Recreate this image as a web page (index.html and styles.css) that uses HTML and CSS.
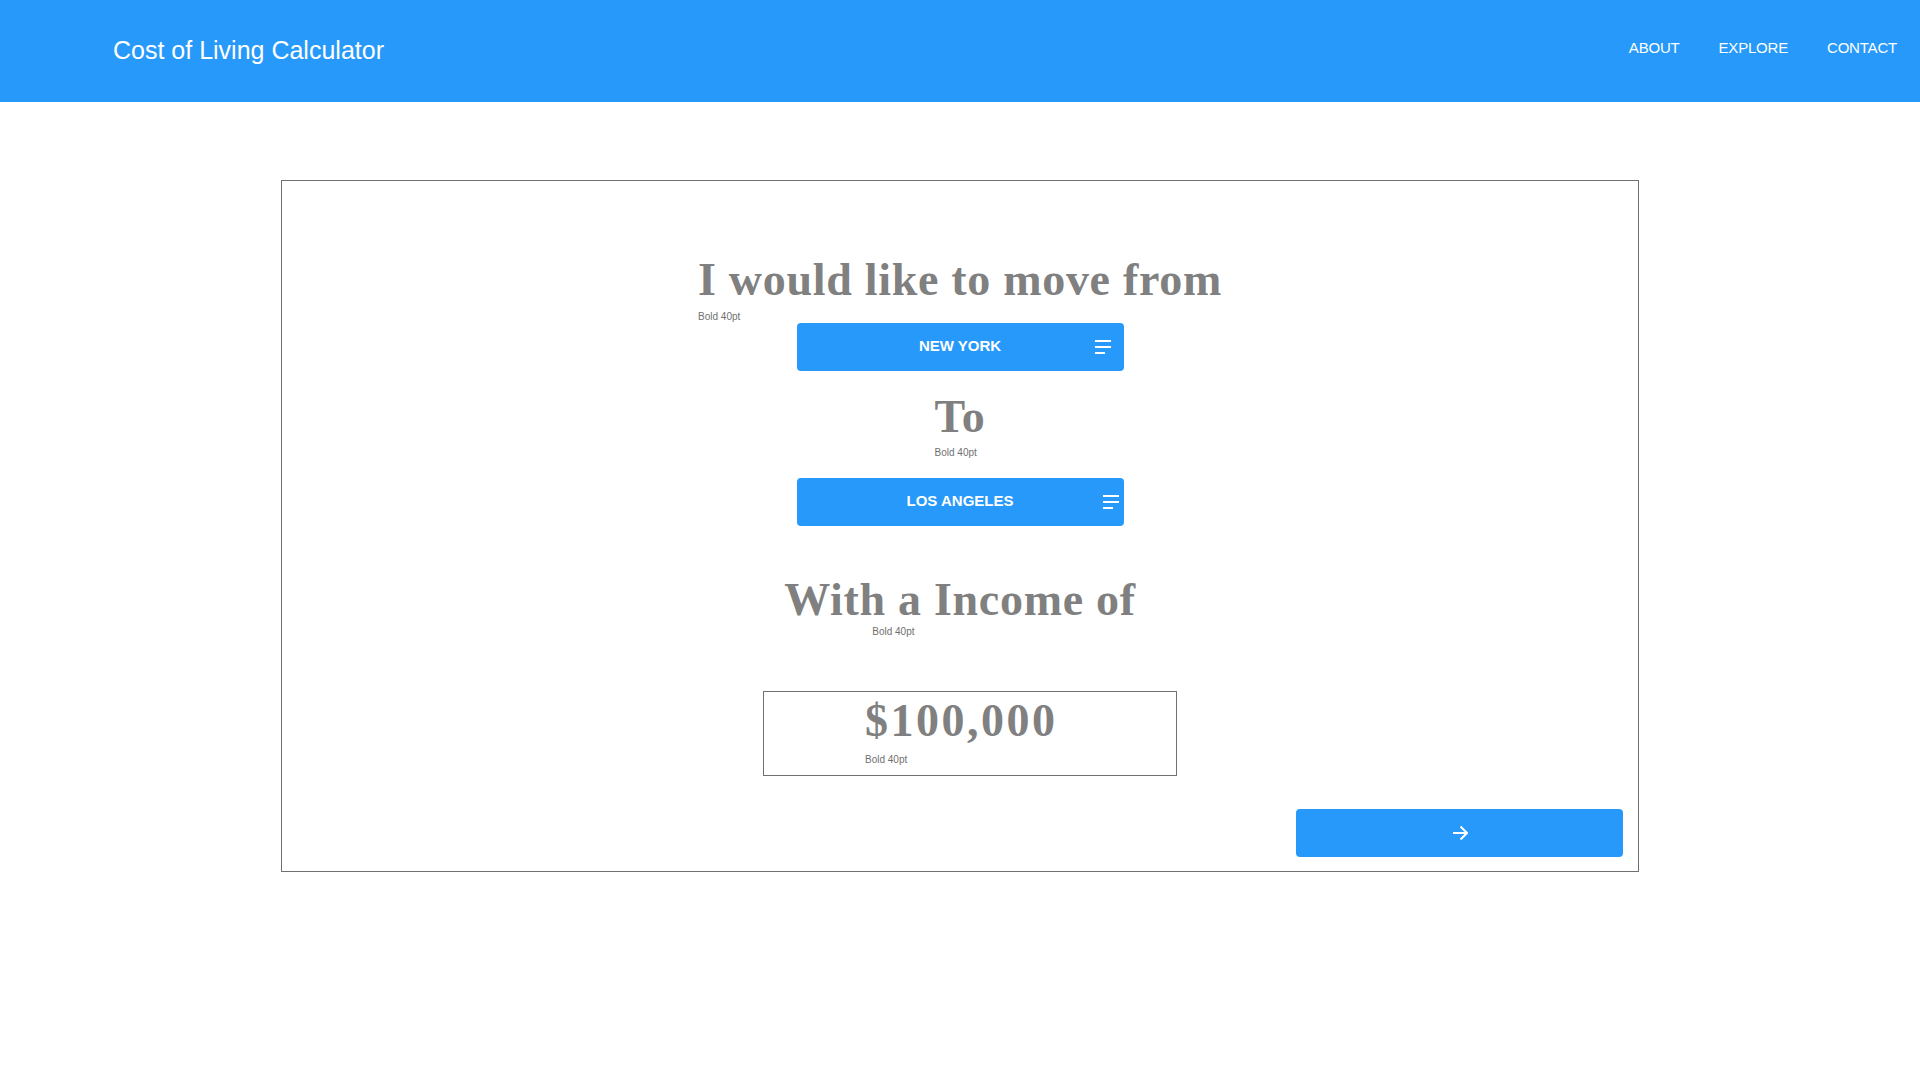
FILE: index.html
```html
<!DOCTYPE html>
<html lang="en">
<head>
<meta charset="utf-8">
<title>Cost of Living Calculator</title>
<link rel="stylesheet" href="styles.css">
</head>
<body>
<header class="topbar">
  <div class="brand">Cost of Living Calculator</div>
  <nav class="nav">
    <a class="nav-link" href="#">ABOUT</a>
    <a class="nav-link" href="#">EXPLORE</a>
    <a class="nav-link" href="#">CONTACT</a>
  </nav>
</header>

<main class="card">
  <div class="group">
    <h2 class="title">I would like to move from</h2>
    <div class="note">Bold 40pt</div>
  </div>
  <button class="select select-first">
    <span class="select-text">NEW YORK</span>
    <svg class="menu-icon menu-icon-a" width="16" height="14" viewBox="0 0 16 14"><path d="M0 1h16M0 7h16M0 13h10" stroke="#fff" stroke-width="2" fill="none"/></svg>
  </button>

  <div class="group group-to">
    <h2 class="title">To</h2>
    <div class="note">Bold 40pt</div>
  </div>
  <button class="select select-second">
    <span class="select-text">LOS ANGELES</span>
    <svg class="menu-icon menu-icon-b" width="16" height="14" viewBox="0 0 16 14"><path d="M0 1h16M0 7h16M0 13h10" stroke="#fff" stroke-width="2" fill="none"/></svg>
  </button>

  <div class="group group-income">
    <h2 class="title">With a Income of</h2>
    <div class="note note-shift">Bold 40pt</div>
  </div>

  <div class="amount-box">
    <div class="group">
      <h2 class="title amount">$100,000</h2>
      <div class="note note-amount">Bold 40pt</div>
    </div>
  </div>

  <button class="next">
    <svg width="16" height="16" viewBox="0 0 16 16"><path d="M1 8h14M8.5 1.5L15 8l-6.5 6.5" stroke="#fff" stroke-width="2" fill="none"/></svg>
  </button>
</main>
</body>
</html>
```

FILE: styles.css
```css
* { box-sizing: border-box; }

body {
  margin: 0;
  background: #ffffff;
  font-family: "Liberation Sans", Arial, sans-serif;
}

.topbar {
  height: 102px;
  background: #2699fb;
  display: flex;
  align-items: flex-start;
  justify-content: space-between;
  padding: 35px 23px 0 113px;
}

.brand {
  color: #ffffff;
  font-size: 25px;
  line-height: 30px;
}

.nav {
  display: flex;
  gap: 39px;
  margin-top: 4px;
}

.nav-link {
  color: #ffffff;
  text-decoration: none;
  font-size: 15px;
  line-height: 18px;
  letter-spacing: -0.2px;
}

.card {
  width: 1358px;
  margin: 78px auto 0;
  border: 1px solid #707070;
  padding: 76px 0 14px;
  display: flex;
  flex-direction: column;
  align-items: center;
}

.group {
  display: flex;
  flex-direction: column;
  align-items: flex-start;
}

.title {
  margin: 0;
  font-family: "Liberation Serif", "Times New Roman", serif;
  font-weight: bold;
  font-size: 46px;
  line-height: 46px;
  letter-spacing: 0.7px;
  color: #808080;
}

.note {
  margin-top: 8px;
  font-size: 10px;
  line-height: 11px;
  color: #707070;
}

.select {
  position: relative;
  width: 327px;
  height: 48px;
  border: none;
  border-radius: 4px;
  background: #2699fb;
  color: #ffffff;
  font-family: "Liberation Sans", Arial, sans-serif;
  font-weight: bold;
  font-size: 15px;
  padding: 0 0 4px;
  display: flex;
  align-items: center;
  justify-content: center;
}

.select-first { margin-top: 1px; }
.select-second { margin-top: 20px; }

.menu-icon {
  position: absolute;
  top: 17px;
}
.menu-icon-a { right: 13px; }
.menu-icon-b { right: 5px; }

.group-to { margin-top: 23px; }
.group-to .note { margin-top: 7px; }

.group-income { margin-top: 51px; }

.note-shift {
  margin-top: 3px;
  margin-left: 88px;
}

.amount-box {
  margin-top: 54px;
  margin-left: 20px;
  width: 414px;
  height: 85px;
  border: 1px solid #707070;
  padding: 6px 0 0 101px;
}

.amount { letter-spacing: 2.5px; }

.note-amount { margin-top: 10px; }

.next {
  align-self: flex-end;
  margin: 33px 15px 0 0;
  width: 327px;
  height: 48px;
  border: none;
  border-radius: 4px;
  background: #2699fb;
  padding: 0;
  display: flex;
  align-items: center;
  justify-content: center;
}
```
